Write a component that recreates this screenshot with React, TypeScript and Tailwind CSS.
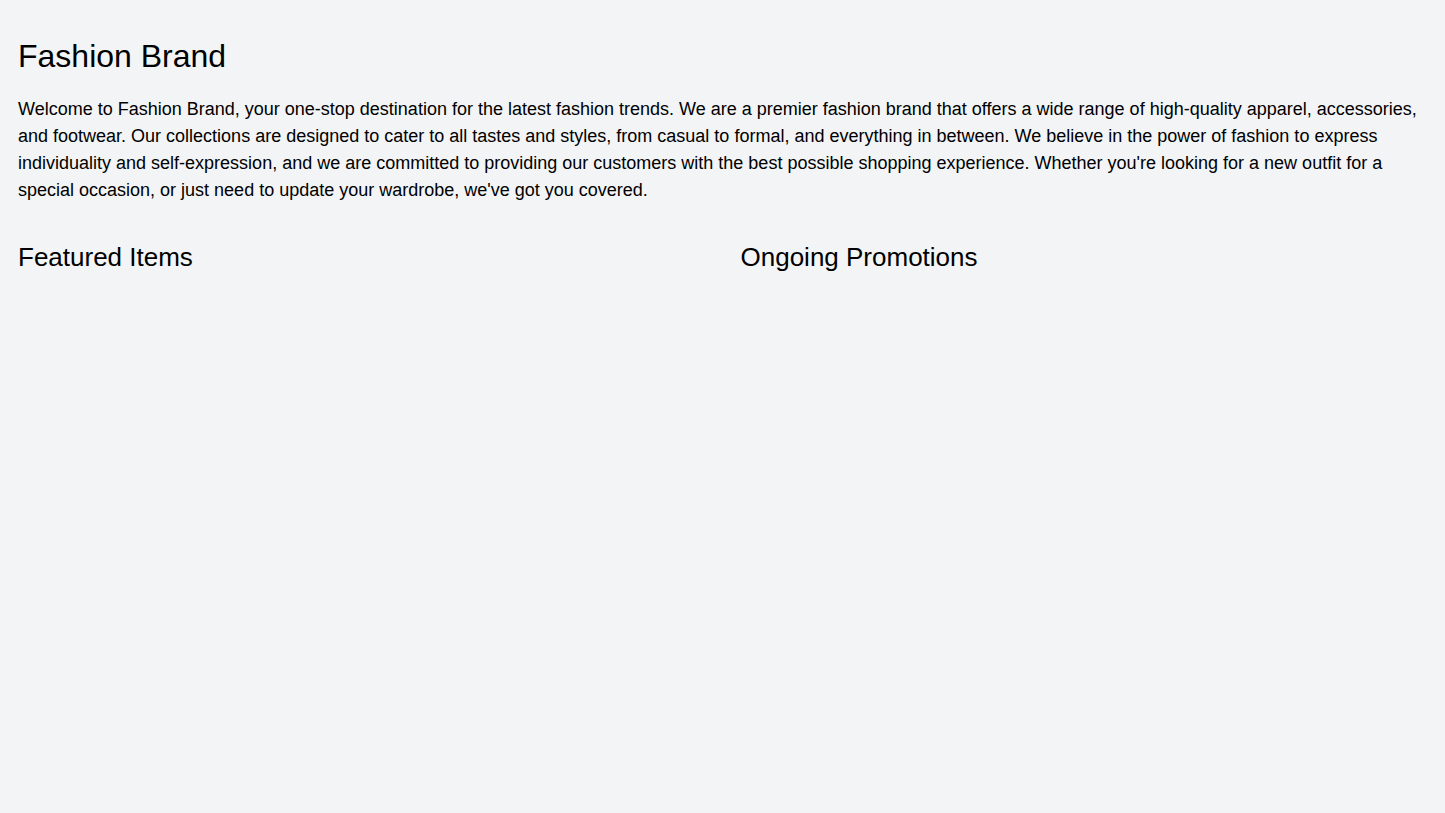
export default function App() {
  return (
    <main className="min-h-screen bg-gray-100 text-black font-['Liberation_Sans',Arial,sans-serif]">
      <div className="px-[18px] pt-9 pb-8">
        <h1 className="text-[32px] leading-10">Fashion Brand</h1>
        <p className="mt-5 text-lg leading-[27px]">
          Welcome to Fashion Brand, your one-stop destination for the latest fashion trends. We are a premier fashion brand that offers a wide range of high-quality apparel, accessories, and footwear. Our collections are designed to cater to all tastes and styles, from casual to formal, and everything in between. We believe in the power of fashion to express individuality and self-expression, and we are committed to providing our customers with the best possible shopping experience. Whether you're looking for a new outfit for a special occasion, or just need to update your wardrobe, we've got you covered.
        </p>
        <div className="mt-[37px] grid grid-cols-2 gap-9">
          <section>
            <h2 className="text-[26px] leading-8">Featured Items</h2>
          </section>
          <section>
            <h2 className="text-[26px] leading-8">Ongoing Promotions</h2>
          </section>
        </div>
      </div>
    </main>
  );
}
